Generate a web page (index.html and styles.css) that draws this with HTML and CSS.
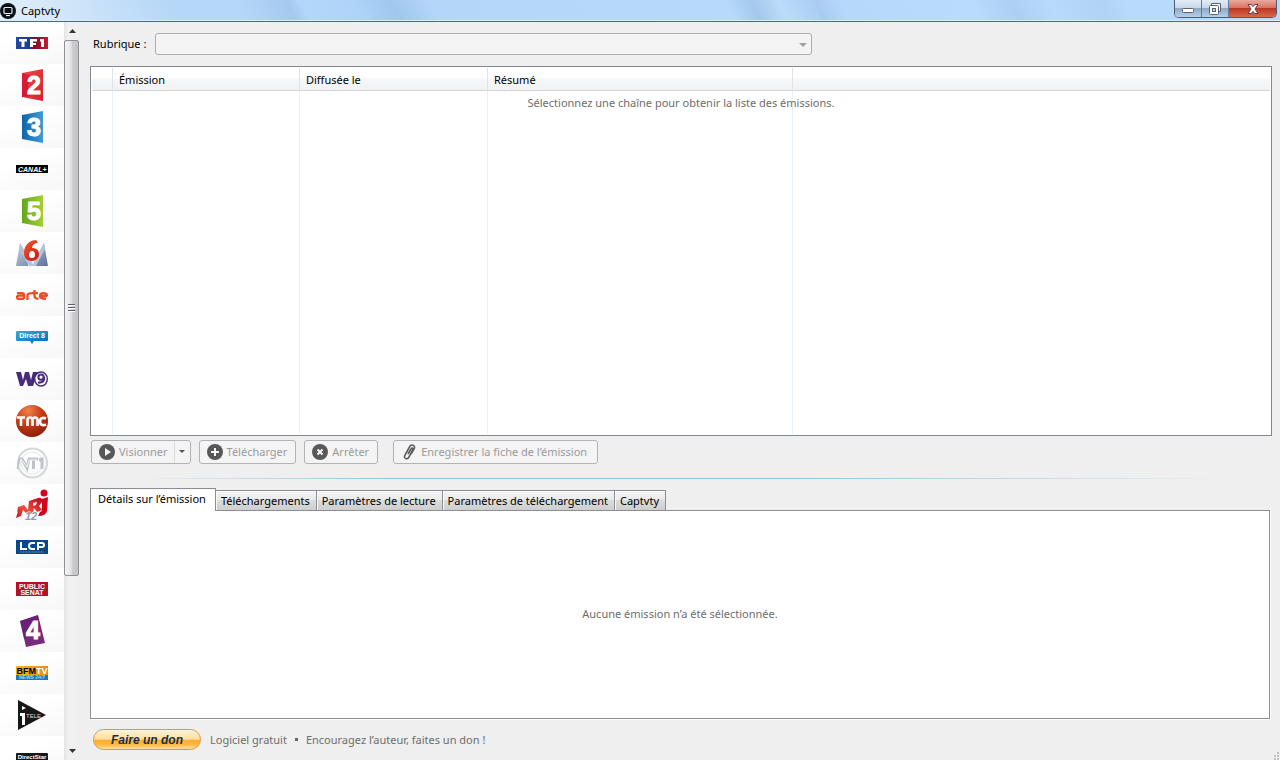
FILE: index.html
```html
<!DOCTYPE html>
<html lang="fr">
<head>
<meta charset="utf-8">
<title>Captvty</title>
<link rel="stylesheet" href="styles.css">
</head>
<body>
<div class="window">
  <header class="titlebar">
    <svg class="app-icon" viewBox="0 0 16 16"><circle cx="8" cy="8" r="8" fill="#0b1116"/><rect x="4" y="4.500" width="8" height="6" rx="1" fill="none" stroke="#e4edf2" stroke-width="1.200"/><path d="M6 12.500h4" stroke="#e4edf2" stroke-width="1.200"/></svg>
    <h1 class="title">Captvty</h1>
    <div class="window-controls">
      <button class="control minimize" aria-label="Réduire"><svg width="14" height="12" viewBox="0 0 14 12"><rect x="1.500" y="5.500" width="11" height="4" rx="1" fill="#fff" stroke="#596273"/></svg></button>
      <button class="control restore" aria-label="Restaurer"><svg width="14" height="14" viewBox="0 0 14 14"><path d="M3.500 3.500v-2h9v8h-2" fill="#fff" stroke="#596273"/><rect x="1.500" y="3.500" width="9" height="9" rx="1" fill="#fff" stroke="#596273"/><rect x="4.500" y="6.500" width="3" height="3" fill="#c3d3e4" stroke="#596273"/></svg></button>
      <button class="control close" aria-label="Fermer"><svg width="12" height="12" viewBox="0 0 12 12"><path d="M1 1.500h3.300L6 3.600l1.700-2.100H11L8 6l3 4.500H7.700L6 8.400l-1.700 2.100H1L4 6z" fill="#fff" stroke="#643b40"/></svg></button>
    </div>
  </header>
  <div class="body">
    <nav class="channels" aria-label="Chaînes">
      <button class="channel" aria-label="TF1"><svg width="32" height="14" viewBox="0 0 32 14"><defs><linearGradient id="tf"><stop offset="0" stop-color="#24499c"/><stop offset=".4" stop-color="#164097"/><stop offset=".58" stop-color="#850c25"/><stop offset="1" stop-color="#c01e2c"/></linearGradient></defs><path d="M0 1h32v12H0z" fill="url(#tf)"/><path d="M3 3h8v2.500H8.500V11h-3V5.500H3zM14 3h7v2.500h-4V7h3v2h-3v2h-3zM24 3h4v8h-3V5.500h-1z" fill="#fff"/></svg></button>
      <button class="channel" aria-label="France 2"><svg width="24" height="32" viewBox="0 0 24 32"><defs><linearGradient id="f2" y2="1"><stop stop-color="#ef4a44"/><stop offset="1" stop-color="#d91f31"/></linearGradient></defs><path d="M2 4 23 0v32L2 28z" fill="url(#f2)"/><path d="M2 4 12 7q-7 8-2 20l-8 1z" fill="#c8062d" opacity=".6"/><text x="7" y="25" class="digit">2</text></svg></button>
      <button class="channel" aria-label="France 3"><svg width="24" height="32" viewBox="0 0 24 32"><defs><linearGradient id="f3"><stop stop-color="#0e65a9"/><stop offset="1" stop-color="#3e9cd4"/></linearGradient></defs><path d="M2 4 23 0v32L2 28z" fill="url(#f3)"/><text x="7" y="25" class="digit">3</text></svg></button>
      <button class="channel" aria-label="Canal+"><svg width="32" height="8" viewBox="0 0 32 8"><path d="M0 0h32v8H0z"/><text x="2" y="7" class="canal">CANAL+</text></svg></button>
      <button class="channel" aria-label="France 5"><svg width="24" height="32" viewBox="0 0 24 32"><defs><linearGradient id="f5"><stop stop-color="#65a51b"/><stop offset="1" stop-color="#a2cf37"/></linearGradient></defs><path d="M2 4 23 0v32L2 28z" fill="url(#f5)"/><text x="7" y="25" class="digit">5</text></svg></button>
      <button class="channel" aria-label="M6"><svg width="32" height="26" viewBox="0 0 32 26"><defs><linearGradient id="m6" y2="1"><stop stop-color="#ccd7e8"/><stop offset="1" stop-color="#5b7198"/></linearGradient><linearGradient id="s6" y2="1"><stop stop-color="#f15a2b"/><stop offset="1" stop-color="#c41a1c"/></linearGradient></defs><path d="M0 26 4 3l8 16V26zM32 26 28 3l-9 17v6z" fill="url(#m6)"/><path d="M4 3 18 26h-5L3 9zM28 3l1 6-9 17h-4z" fill="#b5c3da"/><path d="M20 0C11 1 8 7 8 13c0 5 3 8 8 8 4 0 7-3 7-7s-3-6-7-6c0-3 3-5 6-5zM16 11c2 0 3 2 3 4s-1 3-3 3-3-1-3-3 1-4 3-4z" fill="url(#s6)" fill-rule="evenodd"/></svg></button>
      <button class="channel" aria-label="Arte"><svg width="32" height="10" viewBox="0 0 32 10"><g fill="none" stroke="#f04b24" stroke-width="2.300"><path d="M1 3.200h5q2 0 2 2V9M7 5.700H3Q1 5.700 1 7.300T3 8.800h5M11.500 10V5.200q0-2 5-2M18.500 0v6q0 2.500 4 2.800M16 3.200h6M31 6H24q0-2.800 3.500-2.800T31 6M24 6q0 2.800 6 2.800"/></g></svg></button>
      <button class="channel" aria-label="Direct 8"><svg width="32" height="14" viewBox="0 0 32 14"><defs><linearGradient id="d8" y2="1"><stop stop-color="#39a9df"/><stop offset="1" stop-color="#0069b4"/></linearGradient></defs><path d="M1 1h30q1 0 1 1v8q0 1-1 1H18l-2 3-2-3H1q-1 0-1-1V2q0-1 1-1z" fill="url(#d8)"/><text x="16" y="8" class="direct">Direct 8</text></svg></button>
      <button class="channel" aria-label="W9"><svg width="32" height="16" viewBox="0 0 32 16"><path d="M0 1h5l2 8 2-8h4l2 8 2-8h5l-5 14h-5l-2-7-3 7H4z" fill="#482b79"/><ellipse cx="25" cy="8" rx="6.300" ry="7" fill="#fff" stroke="#482b79" stroke-width="1.400"/><circle cx="25" cy="6.200" r="2.600" fill="none" stroke="#482b79" stroke-width="2"/><path d="M28 6q1 6-6 5.500" fill="none" stroke="#482b79" stroke-width="2.200"/></svg></button>
      <button class="channel" aria-label="TMC"><svg width="32" height="32" viewBox="0 0 32 32"><defs><radialGradient id="tm" cx=".38" cy=".18" r=".85"><stop stop-color="#f1824b"/><stop offset=".5" stop-color="#c63c15"/><stop offset="1" stop-color="#8b1e09"/></radialGradient></defs><circle cx="16" cy="16" r="16" fill="url(#tm)"/><g fill="none" stroke="#fff" stroke-width="2.600"><path d="M1 12.500h8M5 12.500V21M11.500 21v-6q0-2.500 2.500-2.500t2.500 2.500v6M16.500 15q0-2.500 2.500-2.500t2.500 2.500v6M30 13.500q-2-1-3.500-.5-2.500.5-2.500 3.500t2.500 3.500q1.500.5 3.500-.5"/></g></svg></button>
      <button class="channel" aria-label="NT1"><svg width="32" height="32" viewBox="0 0 32 32"><g fill="none" stroke="#d4d7d8"><circle cx="16.500" cy="16" r="14.500" stroke-width="2"/><circle cx="16" cy="16" r="11" stroke="#e5e7e7"/></g><path d="M2 22l2-10h2l5 9 2-9h9M17.500 12v10M23 13l3-1v10" fill="none" stroke="#bfc3c5" stroke-width="3"/><path d="M3 21 5 12l6 8 2-7h8" fill="none" stroke="#f8f9f9"/></svg></button>
      <button class="channel" aria-label="NRJ 12"><svg width="32" height="32" viewBox="0 0 32 32"><defs><linearGradient id="nr" x1="1" x2="0" y2="1"><stop stop-color="#c40020"/><stop offset=".6" stop-color="#ef4f3d"/><stop offset="1" stop-color="#c80b22"/></linearGradient></defs><path d="m1 23 1-5 6-2 4 5 1-9 9-3q5-1 4 4l-3 4 3 4-5 2-3-4-1 5-5 2-5-5-2 6-5 2 2-7z" fill="url(#nr)"/><path d="m17 14 4-1-1 3-3 1z" fill="#fff"/><circle cx="28" cy="4" r="3.500" fill="#d4001c"/><path d="m26 10 6-2-1 14q-1 5-9 5l2-4q2 0 2-3z" fill="#d4001c"/><text x="9" y="31" class="twelve">12</text></svg></button>
      <button class="channel" aria-label="LCP"><svg width="32" height="14" viewBox="0 0 32 14"><path d="M0 0h32v14H0z" fill="#084888"/><g fill="none" stroke="#fff" stroke-width="2"><path d="M5 2v7h6M19 3h-3q-3 0-3 3t3 3h3M22 10V3h4q2 0 2 2t-2 2h-4"/></g><path d="M4 12h24" stroke="#7797b8" stroke-dasharray="1 .5"/></svg></button>
      <button class="channel" aria-label="Public Sénat"><svg width="32" height="14" viewBox="0 0 32 14"><path d="M0 0h32v14H0z" fill="#b31127"/><text x="16" y="7" class="senat">PUBLIC</text><text x="16" y="13" class="senat">SENAT</text></svg></button>
      <button class="channel" aria-label="France 4"><svg width="26" height="32" viewBox="0 0 26 32"><path d="M1 6 19 0l7 28-19 4z" fill="#762b7d"/><path d="M1 6 19 0l2 12Q10 14 5 24z" fill="#5e1768" opacity=".45"/><text x="7" y="24" class="digit">4</text></svg></button>
      <button class="channel" aria-label="BFM TV"><svg width="32" height="14" viewBox="0 0 32 14"><defs><linearGradient id="bf"><stop stop-color="#f5b51b"/><stop offset="1" stop-color="#e58b23"/></linearGradient></defs><path d="M0 0h32v9H0z" fill="url(#bf)"/><path d="M0 9h32v5H0z" fill="#137cb8"/><text x="16" y="8" class="bfm">BFM<tspan fill="#fff">TV</tspan></text><text x="16" y="13" class="news">NEWS 24/7</text></svg></button>
      <button class="channel" aria-label="i&gt;Télé"><svg width="28" height="32" viewBox="0 0 28 32"><path d="M0 1 28 16 0 31z" fill="#171717"/><path d="m4 7 4 2-4 2zM2 14h5v12H4v-9H2z" fill="#fff"/><text x="8" y="19" class="tele">TELE</text></svg></button>
      <button class="channel" aria-label="Direct Star"><svg width="32" height="8" viewBox="0 0 32 8"><rect width="32" height="8" rx="1" fill="#171717"/><text x="16" y="6" class="star">DirectStar</text></svg></button>
    </nav>
    <div class="scrollbar">
      <button class="scroll-arrow" aria-label="Monter"><svg width="7" height="4" viewBox="0 0 7 4"><path d="M3.500 0 7 4H0z" fill="#303439"/></svg></button>
      <div class="scroll-track"><div class="scroll-thumb"><span class="grip"></span></div></div>
      <button class="scroll-arrow" aria-label="Descendre"><svg width="7" height="4" viewBox="0 0 7 4"><path d="M0 0h7L3.500 4z" fill="#303439"/></svg></button>
    </div>
    <main class="main">
      <div class="filter">
        <label for="rubrique">Rubrique :</label>
        <div class="select-wrap">
          <select id="rubrique" disabled><option></option></select>
          <svg class="select-arrow" width="8" height="4" viewBox="0 0 8 4"><path d="M0 0h8L4 4z" fill="#a0a0a0"/></svg>
        </div>
      </div>
      <section class="programmes">
        <table class="grid">
          <colgroup><col class="col-mark"><col class="col-show"><col class="col-date"><col class="col-summary"><col></colgroup>
          <thead><tr><th></th><th>Émission</th><th>Diffusée le</th><th>Résumé</th><th></th></tr></thead>
          <tbody><tr><td></td><td></td><td></td><td></td><td></td></tr></tbody>
        </table>
        <p class="grid-message">Sélectionnez une chaîne pour obtenir la liste des émissions.</p>
      </section>
      <div class="toolbar">
        <div class="split">
          <button class="tool" disabled><svg width="16" height="16" viewBox="0 0 16 16"><circle cx="8" cy="8" r="8" fill="#585858"/><path d="m6 4 6 4-6 4z" fill="#f6f6f6"/></svg>Visionner</button>
          <button class="tool-menu" disabled aria-label="Options de visionnage"><svg width="6" height="3" viewBox="0 0 6 3"><path d="M0 0h6L3 3z" fill="#555"/></svg></button>
        </div>
        <button class="tool" disabled><svg width="16" height="16" viewBox="0 0 16 16"><circle cx="8" cy="8" r="8" fill="#585858"/><path d="M8 4v8M4 8h8" stroke="#f6f6f6" stroke-width="2"/></svg>Télécharger</button>
        <button class="tool" disabled><svg width="16" height="16" viewBox="0 0 16 16"><circle cx="8" cy="8" r="8" fill="#585858"/><path d="m5.500 5.500 5 5m0-5-5 5" stroke="#f6f6f6" stroke-width="2"/></svg>Arrêter</button>
        <button class="tool record" disabled><svg width="14" height="16" viewBox="0 0 14 16"><path d="m6 10 3-5q1-2 2 0L7 13q-2 3-4 1-1-1 0-3l5-9q2-2 4 0 1 1 0 3l-3 5" fill="none" stroke="#5c5c5c" stroke-width="1.600"/></svg>Enregistrer la fiche de l’émission</button>
      </div>
      <hr class="splitter">
      <div class="tabs" role="tablist">
        <button class="tab active" role="tab" aria-selected="true">Détails sur l’émission</button>
        <button class="tab" role="tab">Téléchargements</button>
        <button class="tab" role="tab">Paramètres de lecture</button>
        <button class="tab" role="tab">Paramètres de téléchargement</button>
        <button class="tab" role="tab">Captvty</button>
      </div>
      <section class="details" role="tabpanel"><p>Aucune émission n’a été sélectionnée.</p></section>
      <footer class="footer">
        <button class="donate">Faire un don</button>
        <span>Logiciel gratuit</span><span class="dot"></span><span>Encouragez l’auteur, faites un don !</span>
      </footer>
      <svg class="resize" width="7" height="8" viewBox="0 0 7 8"><path d="M4 0h2v2H4zM4 3h2v2H4zM4 6h2v2H4zM1 3h2v2H1zM1 6h2v2H1z" fill="#c2c2c2"/></svg>
    </main>
  </div>
</div>
</body>
</html>
```
FILE: styles.css
```css
* { box-sizing: border-box; }
body { margin: 0; font: 11px/16px "Noto Sans", "Open Sans", sans-serif; color: #000; background: #efefef; }
button { margin: 0; padding: 0; border: 0; background: none; font: inherit; color: inherit; }
svg { display: block; flex: none; }
p { margin: 0; }
.window { display: flex; flex-direction: column; height: 100vh; overflow: hidden; }

.titlebar { display: flex; align-items: center; gap: 5px; height: 22px; flex: none; border-bottom: 1px solid #4b688c; box-shadow: inset 0 -1px #d9efff; background: linear-gradient(65deg, #e3f0fb 0, #c9e1f8 8%, #b5d7f8 14%, #b5d7f8 19%, #a5caef 23%, #b3d7fa 24%, #aed4f9 28%, #a0c7ee 31%, #b3d6f9 34%, #b7dafc 57%, #a3c8ec 59%, #bcdcfb 61%, #a9cdf2 64%, #b6d9fb 66%, #b9dbfc 76%, #accff4 79%, #b8dafb 82%, #b0d3f6 86%, #b8dafb 88%, #b8dafb 100%); }
.app-icon { width: 16px; height: 16px; }
.title { margin: 0; font-size: 11px; font-weight: 400; }
.window-controls { display: flex; align-self: flex-start; height: 18px; margin-left: auto; margin-right: 3px; border: 1px solid #515b6d; border-top: 0; border-radius: 0 0 5px 5px; overflow: hidden; }
.control { display: flex; align-items: center; justify-content: center; width: 27px; background: linear-gradient(#e2ecf7 0, #c6d6e8 48%, #91a9c4 50%, #b7d0ea 100%); border-right: 1px solid #6b7a8f; }
.close { width: 47px; border: 0; background: linear-gradient(#e9aa9c 0, #d7715f 48%, #bb3723 50%, #d8694b 100%); }

.body { display: flex; flex: 1; min-height: 0; }
.channels { width: 64px; flex: none; overflow: hidden; background: #fff; }
.channel { display: flex; align-items: center; justify-content: center; width: 64px; height: 42px; background: linear-gradient(160deg, #fff 30%, #f7f7f7); }
.digit { font: bold 25px "Liberation Sans", sans-serif; fill: #fff; stroke: #fff; }
.canal { font: italic bold 7px "Liberation Sans", sans-serif; fill: #fff; }
.direct { font: bold 7px "Liberation Sans", sans-serif; fill: #fff; text-anchor: middle; }
.twelve { font: italic bold 11px "Liberation Sans", sans-serif; fill: #8e9ba8; stroke: #fff; paint-order: stroke; }
.senat { font: bold 7px "Liberation Sans", sans-serif; fill: #fff; text-anchor: middle; }
.bfm { font: bold 9px "Liberation Sans", sans-serif; text-anchor: middle; }
.news { font: bold 5px "Liberation Sans", sans-serif; fill: #a0d5ef; text-anchor: middle; }
.tele { font: 6px "Liberation Sans", sans-serif; fill: #ddd; }
.star { font: bold 6px "Liberation Sans", sans-serif; fill: #fff; text-anchor: middle; }

.scrollbar { display: flex; flex-direction: column; width: 16px; flex: none; background: linear-gradient(90deg, #e5e5e5, #f1f1f1 30%, #efefef); }
.scroll-arrow { display: flex; align-items: center; justify-content: center; height: 18px; }
.scroll-track { flex: 1; }
.scroll-thumb { display: flex; align-items: center; justify-content: center; width: 15px; height: 76.400%; border: 1px solid #8e8f94; border-radius: 2px; background: linear-gradient(90deg, #f4f4f5, #e4e4e6 48%, #d0d0d3 52%, #c1c1c6); }
.grip { width: 7px; height: 8px; background: repeating-linear-gradient(#5d5f65 0 1px, #fff 1px 2px, transparent 2px 3px); }

.main { position: relative; display: flex; flex-direction: column; flex: 1; min-width: 0; padding: 11px 8px 10px 10px; }
.filter { display: flex; align-items: center; gap: 9px; padding-left: 3px; margin-bottom: 11px; }
.select-wrap { position: relative; flex: 0 1 657px; }
select { display: block; appearance: none; width: 100%; height: 22px; padding: 0 20px 0 6px; border: 1px solid #adadad; border-radius: 3px; background: #f4f4f4; font: inherit; opacity: 1; }
.select-arrow { position: absolute; right: 5px; top: 10px; }

.programmes { position: relative; flex: 53 1 0; min-height: 0; padding: 1px; border: 1px solid #828790; background: #fff; }
.grid { width: 100%; height: 100%; table-layout: fixed; border-collapse: separate; border-spacing: 0; }
.col-mark { width: 21px; }
.col-show { width: 187px; }
.col-date { width: 188px; }
.col-summary { width: 305px; }
.grid th { height: 23px; padding: 2px 6px 0; border-right: 1px solid #e0e4e8; border-bottom: 1px solid #d5d5d5; background: linear-gradient(#fff 45%, #f6f7f8 50%, #f1f2f4); font-weight: 400; text-align: left; }
.grid td { padding: 0; border-right: 1px solid #e6f1f9; }
.grid th:last-child, .grid td:last-child { border-right: 0; }
.grid-message { position: absolute; top: 28px; left: 0; right: 0; text-align: center; color: #6d6d6d; }

.toolbar { display: flex; gap: 8px; margin: 4px 0 0 1px; height: 24px; }
.tool { display: flex; align-items: center; gap: 4px; height: 24px; padding: 0 8px 0 7px; color: #9b9b9b; border: 1px solid #b3b3b3; border-radius: 3px; background: #f4f4f4; white-space: nowrap; }
.split { display: flex; border: 1px solid #b3b3b3; border-radius: 3px; background: #f4f4f4; }
.split .tool { height: 22px; border: 0; padding-right: 6px; }
.tool-menu { display: flex; align-items: center; justify-content: center; width: 16px; border-left: 1px solid #ddd; }
.tool.record { margin-left: 7px; padding: 0 10px 0 8px; gap: 5px; }
.splitter { flex: none; width: 100%; height: 1px; margin: 14px 0 9px; border: 0; background: linear-gradient(90deg, rgba(143, 198, 226, 0) 4%, #8fc6e2 25%, #8fc6e2 60%, rgba(143, 198, 226, 0) 96%); }

.tabs { display: flex; align-items: flex-end; height: 23px; margin-bottom: -1px; position: relative; }
.tab { height: 21px; padding: 1px 6px 0 5px; border: 1px solid #8c8e94; border-left: 0; background: linear-gradient(#f3f3f3, #ebebeb 45%, #dcdcdc 50%, #cecece); box-shadow: inset 1px 1px #fafafa; white-space: nowrap; }
.tab.active { height: 23px; padding: 0 9px 2px 7px; border-left: 1px solid #8c8e94; border-bottom: 0; background: #fff; }
.details { display: flex; align-items: center; justify-content: center; flex: 30 1 0; min-height: 0; margin-right: 2px; border: 1px solid #8c8e94; box-shadow: 1px 1px #fff; background: #fff; color: #6d6d6d; }
.footer { display: flex; align-items: center; gap: 8px; margin: 10px 0 0 3px; height: 21px; color: #6d6d6d; }
.donate { width: 108px; height: 21px; margin-right: 1px; border: 1px solid #e0964a; border-radius: 11px; background: linear-gradient(#fff3d5 0, #ffdf9f 48%, #ffae2f 55%, #ffb73f 75%, #ffe0a0); color: #12304a; font: italic bold 12px/16px "Liberation Sans", sans-serif; }
.dot { width: 3px; height: 3px; background: #666; }
.resize { position: absolute; right: 0; bottom: 0; }
```
